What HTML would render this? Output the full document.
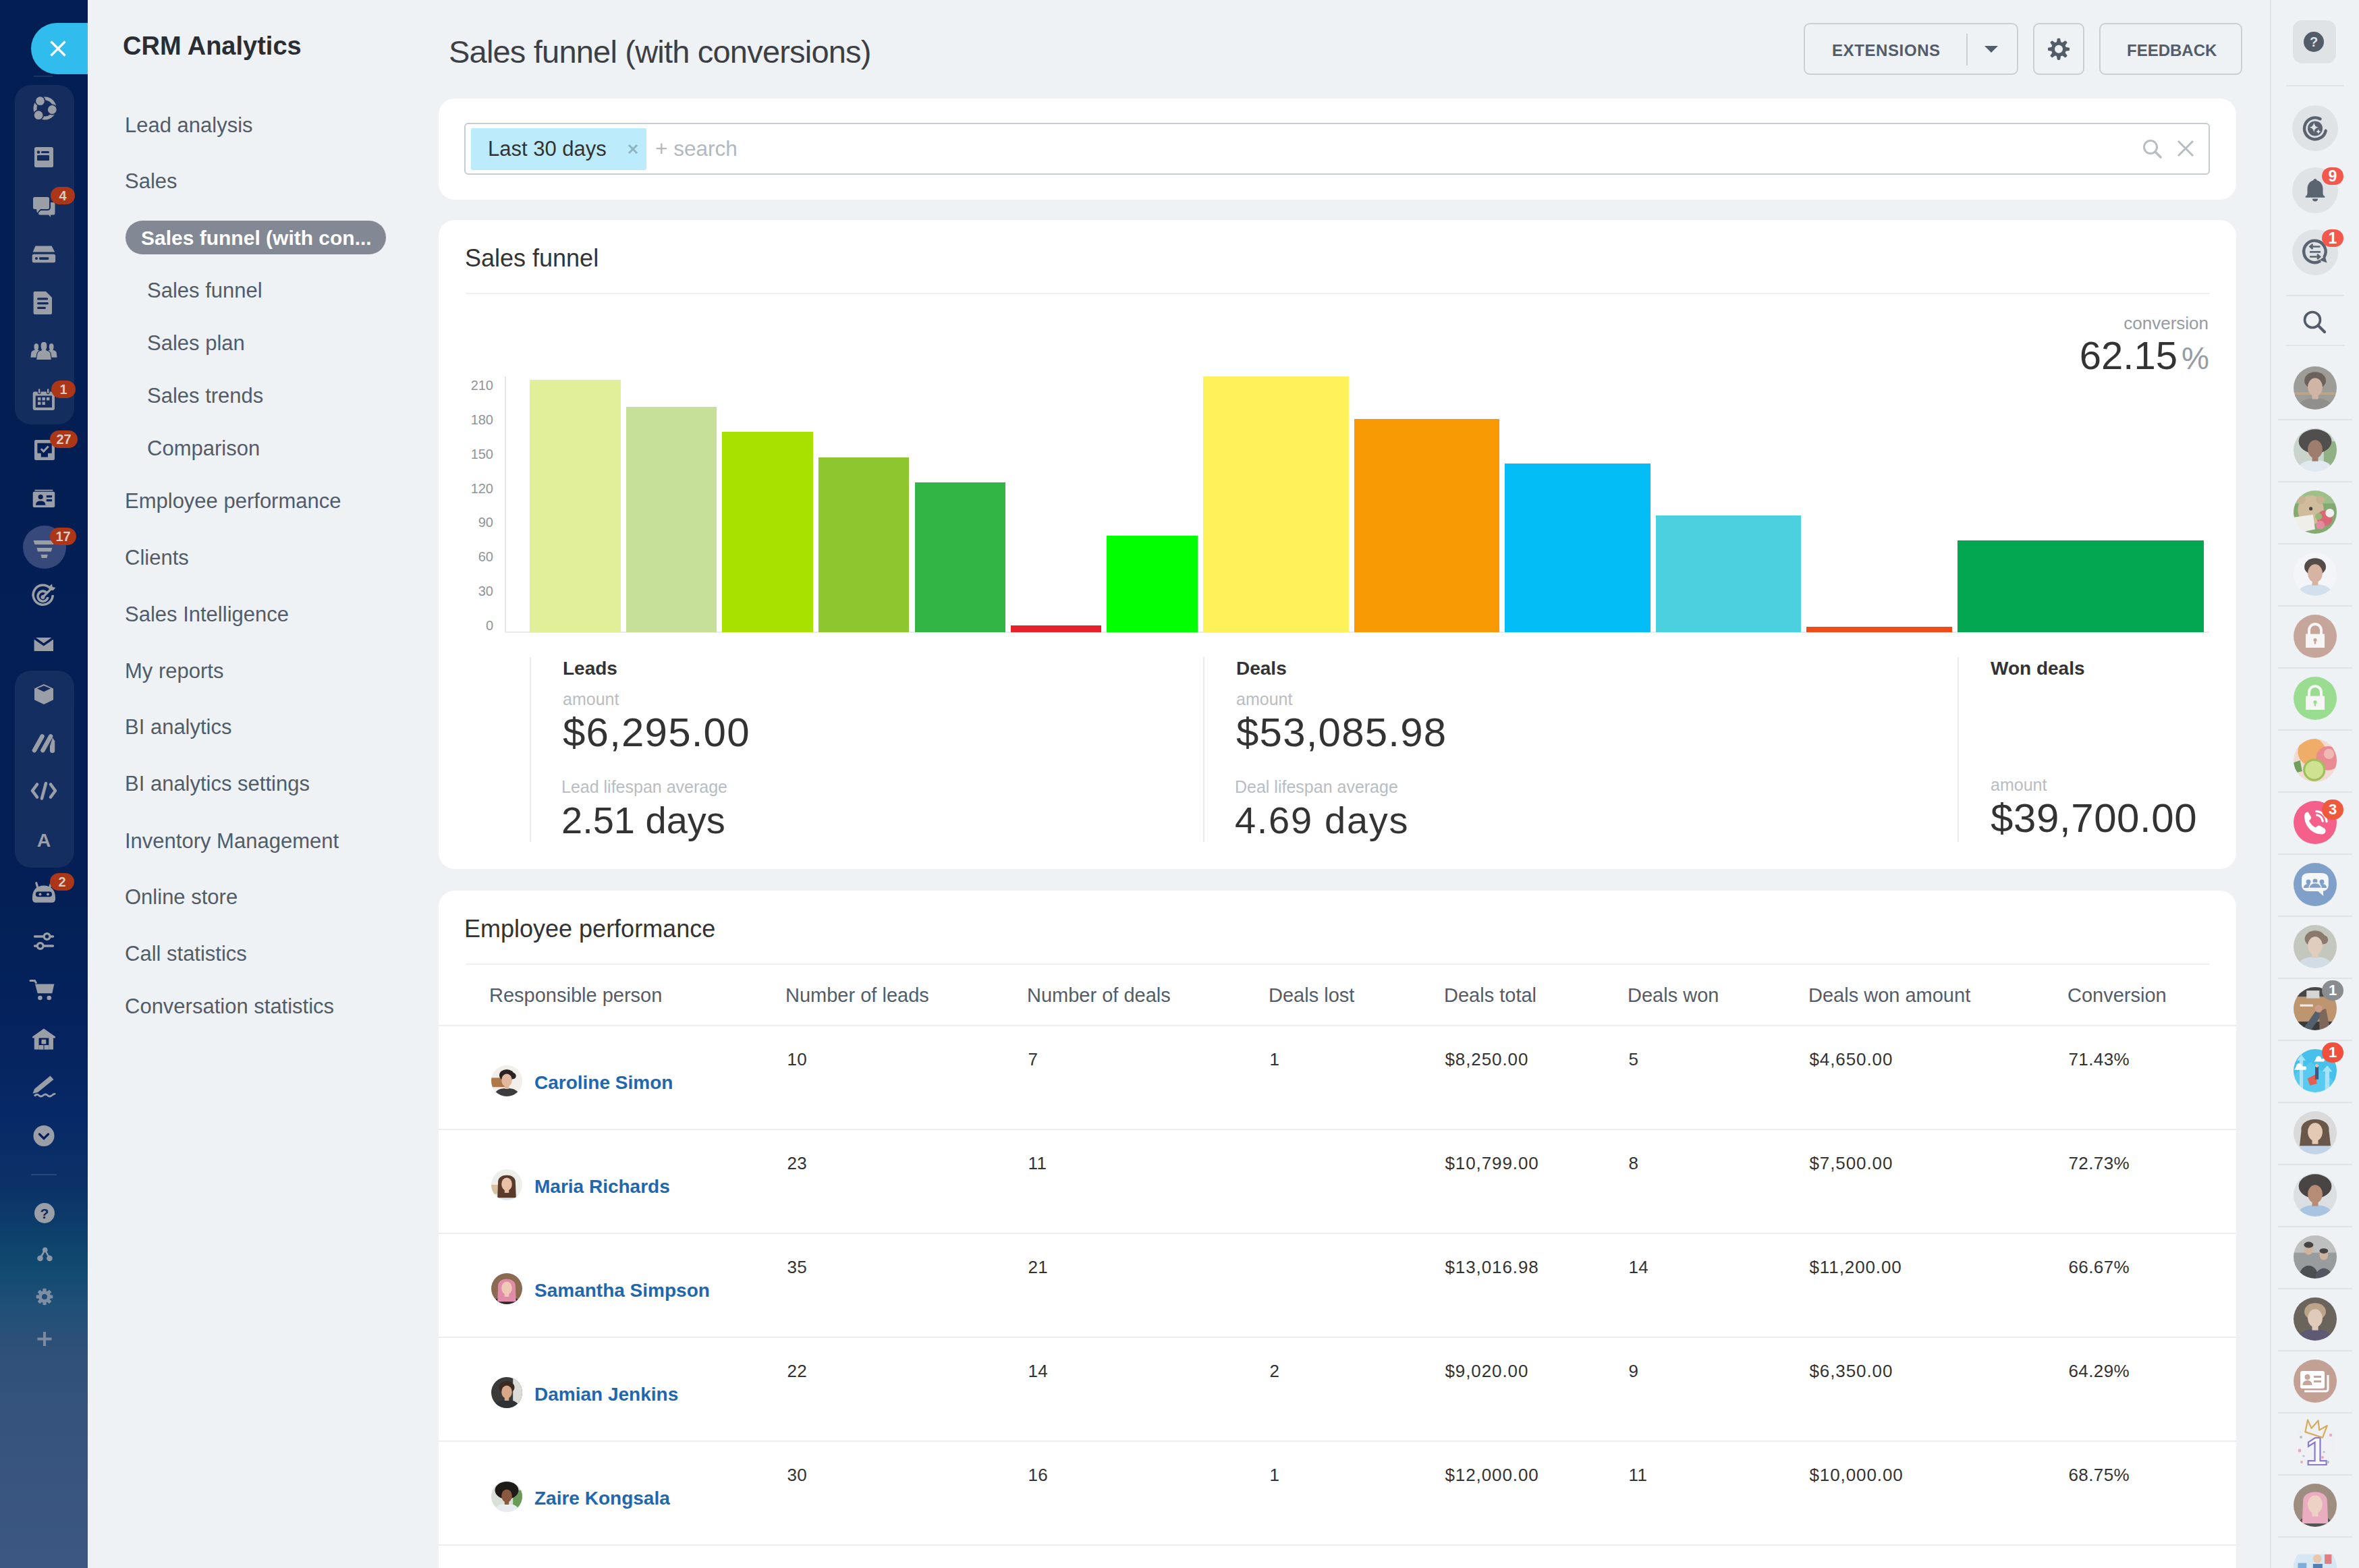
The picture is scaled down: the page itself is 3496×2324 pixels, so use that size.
<!DOCTYPE html>
<html><head><meta charset="utf-8"><title>CRM Analytics</title>
<style>
html,body{margin:0;padding:0;width:3496px;height:2324px;overflow:hidden;background:#eef2f4;font-family:"Liberation Sans", sans-serif}
.t{position:absolute;line-height:1;white-space:nowrap}
svg{display:block}
</style></head><body>
<div style="position:absolute;left:0;top:0;width:3496px;height:2324px;background:#eef2f4"></div>
<div style="position:absolute;left:0;top:0;width:130px;height:2324px;background:linear-gradient(180deg,#031e52 0px,#031f55 1300px,#04225c 1500px,#072866 1650px,#0b3268 1760px,#0d406b 1830px,#104a70 1880px,#1f4f77 1930px,#2e5079 2000px,#36537d 2100px,#3b5782 2324px)"></div>
<div style="position:absolute;left:46px;top:34px;width:84px;height:76px;background:#30bdee;border-radius:38px 0 0 38px"></div>
<svg style="position:absolute;left:71px;top:57px" width="30" height="30" viewBox="0 0 30 30"><path d="M4.5 4.5L25.5 25.5M25.5 4.5L4.5 25.5" stroke="#fff" stroke-width="3.4" stroke-linecap="butt"/></svg>
<div style="position:absolute;left:50px;top:112px;width:28px;height:2px;background:#1e3366"></div>
<div style="position:absolute;left:22px;top:126px;width:88px;height:503px;background:rgba(255,255,255,0.07);border-radius:24px"></div>
<div style="position:absolute;left:22px;top:994px;width:88px;height:292px;background:rgba(255,255,255,0.07);border-radius:24px"></div>
<div style="position:absolute;left:34px;top:779px;width:64px;height:64px;border-radius:50%;background:#36497a"></div>
<svg style="position:absolute;left:0;top:0" width="130" height="2324" viewBox="0 0 130 2324"><circle cx="66.5" cy="160.5" r="14.5" stroke="#9a9ea7" stroke-width="5" fill="none"/><circle cx="59.5" cy="149.7" r="6.4" fill="#9a9ea7" stroke="#152b5c" stroke-width="3.2"/><circle cx="77.3" cy="162.5" r="6.4" fill="#9a9ea7" stroke="#152b5c" stroke-width="3.2"/><circle cx="57.1" cy="170.7" r="6.4" fill="#9a9ea7" stroke="#152b5c" stroke-width="3.2"/><circle cx="66.5" cy="160.5" r="9" fill="#152b5c"/><circle cx="59.5" cy="149.7" r="6.4" fill="#9a9ea7"/><circle cx="77.3" cy="162.5" r="6.4" fill="#9a9ea7"/><circle cx="57.1" cy="170.7" r="6.4" fill="#9a9ea7"/><rect x="51" y="218" width="28" height="30" rx="2.5" fill="#9a9ea7"/><circle cx="57" cy="225.5" r="2.2" fill="#152b5c"/><rect x="61" y="224" width="12" height="3" rx="1.5" fill="#152b5c"/><rect x="55" y="230" width="18" height="8" rx="1" fill="#152b5c"/><rect x="57" y="300" width="24.5" height="18.5" rx="2.5" fill="#9a9ea7"/><path d="M71 317 h4 v5z" fill="#9a9ea7"/><rect x="49" y="292" width="24" height="18" rx="2.5" fill="#9a9ea7" stroke="#152b5c" stroke-width="4"/><path d="M54 309 h7 l-6 6.5z" fill="#9a9ea7" stroke="#152b5c" stroke-width="3"/><rect x="49" y="292" width="24" height="18" rx="2.5" fill="#9a9ea7"/><path d="M53.5 308 h8 l-6.5 7.5z" fill="#9a9ea7"/><path d="M52.5 364.4 h24 l4.7 9.2 h-32.5z" fill="#9a9ea7"/><rect x="47.7" y="376.8" width="34.4" height="12.5" rx="2.5" fill="#9a9ea7"/><circle cx="54" cy="383" r="2" fill="#152b5c"/><rect x="58.2" y="381.3" width="14" height="3.6" rx="1" fill="#152b5c"/><path d="M51.6 432 h16.4 l9 9 v23 a2 2 0 0 1 -2 2 h-23.4 a2 2 0 0 1 -2-2 v-30 a2 2 0 0 1 2-2z" fill="#9a9ea7"/><rect x="55" y="441.3" width="16.2" height="3.2" rx="1.6" fill="#152b5c"/><rect x="55" y="448" width="17" height="3.2" rx="1.6" fill="#152b5c"/><rect x="55" y="454.7" width="13" height="3.2" rx="1.6" fill="#152b5c"/><g fill="#9a9ea7"><path transform="translate(53.8 519.5) scale(0.78)" d="M-10.8 13 L-9.5 4 C-9 1.5 -7 0.5 -3.5 -0.5 L-3 -2 C-4.5 -4 -4.5 -7 -4.1 -10 C-3.5 -12.5 -2 -13 0 -13 C2 -13 3.5 -12.5 4.1 -10 C4.5 -7 4.5 -4 3 -2 L3.5 -0.5 C7 0.5 9 1.5 9.5 4 L10.8 13z"/><path transform="translate(76.2 519.5) scale(0.78)" d="M-10.8 13 L-9.5 4 C-9 1.5 -7 0.5 -3.5 -0.5 L-3 -2 C-4.5 -4 -4.5 -7 -4.1 -10 C-3.5 -12.5 -2 -13 0 -13 C2 -13 3.5 -12.5 4.1 -10 C4.5 -7 4.5 -4 3 -2 L3.5 -0.5 C7 0.5 9 1.5 9.5 4 L10.8 13z"/></g><path transform="translate(65 520)" d="M-10.8 13 L-9.5 4 C-9 1.5 -7 0.5 -3.5 -0.5 L-3 -2 C-4.5 -4 -4.5 -7 -4.1 -10 C-3.5 -12.5 -2 -13 0 -13 C2 -13 3.5 -12.5 4.1 -10 C4.5 -7 4.5 -4 3 -2 L3.5 -0.5 C7 0.5 9 1.5 9.5 4 L10.8 13z" fill="#9a9ea7" stroke="#152b5c" stroke-width="2.2"/><path transform="translate(65 520)" d="M-10.8 13 L-9.5 4 C-9 1.5 -7 0.5 -3.5 -0.5 L-3 -2 C-4.5 -4 -4.5 -7 -4.1 -10 C-3.5 -12.5 -2 -13 0 -13 C2 -13 3.5 -12.5 4.1 -10 C4.5 -7 4.5 -4 3 -2 L3.5 -0.5 C7 0.5 9 1.5 9.5 4 L10.8 13z" fill="#9a9ea7"/><rect x="48.7" y="580.5" width="32.3" height="27.5" rx="3" fill="#9a9ea7"/><rect x="52.7" y="586.5" width="24.3" height="17.5" fill="#152b5c"/><rect x="56.4" y="575.7" width="3.6" height="8" rx="1.8" fill="#9a9ea7" stroke="#152b5c" stroke-width="1.2"/><rect x="69.4" y="575.7" width="3.6" height="8" rx="1.8" fill="#9a9ea7" stroke="#152b5c" stroke-width="1.2"/><g fill="#9a9ea7"><rect x="56" y="589" width="4.4" height="4.4"/><rect x="62.5" y="589" width="4.4" height="4.4"/><rect x="69" y="589" width="4.4" height="4.4"/><rect x="56" y="595.6" width="4.4" height="4.4"/><rect x="62.5" y="595.6" width="4.4" height="4.4"/></g><rect x="51" y="652" width="30" height="30" rx="2.2" fill="#9a9ea7"/><path d="M55.4 656.7 h21.4 v15 h-5.8 v5.7 h-10.2 v-5.7 h-5.4z" fill="#031f55"/><path d="M60.8 665.3 l3.8 3.8 l7.1 -7.6" stroke="#9a9ea7" stroke-width="3" fill="none"/><rect x="51.5" y="725.8" width="26.8" height="1.8" fill="#9a9ea7"/><rect x="48.7" y="728.7" width="32.5" height="23.3" rx="2" fill="#9a9ea7"/><circle cx="60.2" cy="736.5" r="3.6" fill="#031f55"/><path d="M53 748.8 c0-4.5 2.8-6.3 7.2-6.3 s7.2 1.8 7.2 6.3z" fill="#031f55"/><rect x="68.8" y="734.2" width="8.3" height="3.2" fill="#031f55"/><rect x="68.8" y="740" width="8.3" height="3.2" fill="#031f55"/><path d="M49.6 801 h31.4 l-1.8 6 h-27.8z" fill="#9a9ea7"/><path d="M54.4 812 h23 l-1.6 5.6 h-19.8z" fill="#9a9ea7"/><path d="M60.5 822 h10.2 l-1.2 5 h-7.8z" fill="#9a9ea7"/><g fill="none" stroke="#9a9ea7" stroke-width="3.6"><path d="M74 871.5 A14.5 14.5 0 1 0 78.2 882"/><path d="M69.5 879 A7.5 7.5 0 1 0 71 885"/></g><circle cx="63.5" cy="885" r="3" fill="#9a9ea7"/><path d="M63.5 885 L75.5 873" stroke="#9a9ea7" stroke-width="3.2"/><path d="M73 869 l4-3.5 l0.8 4.6 l4.6 0.8 l-3.5 4 h-5.9z" fill="#9a9ea7"/><path d="M50.6 945 h28.4 v20 h-28.4z" fill="#9a9ea7"/><path d="M50.6 945.5 l14.2 10 l14.2 -10" stroke="#031f55" stroke-width="3.4" fill="none"/><path d="M65 1014 l14 6.5 v16.8 l-14 6.7 l-14 -6.7 v-16.8z" fill="#9a9ea7"/><path d="M55 1020.6 l10-4.4 l10 4.4 l-10 4.6z" fill="#152b5c"/><g stroke="#9a9ea7" stroke-width="6.6" stroke-linecap="round"><path d="M51 1112 L62.5 1091.5"/><path d="M63.5 1112 L75 1091.5"/></g><path d="M78 1093.3 l3.2 5 v14.2 a3.6 3.6 0 0 1 -7.2 0 v-7z" fill="#9a9ea7"/><g stroke="#9a9ea7" stroke-width="4.6" fill="none" stroke-linecap="round" stroke-linejoin="round"><path d="M55 1162.5 L48 1172 L55 1181.5"/><path d="M75 1162.5 L82 1172 L75 1181.5"/><path d="M68 1161 L62 1183.5"/></g><text x="65" y="1255.2" font-size="28.5" font-weight="700" text-anchor="middle" fill="#9a9ea7" font-family="Liberation Sans">A</text><path d="M53.8 1308.7 L56 1316" stroke="#9a9ea7" stroke-width="3.2" stroke-linecap="round"/><path d="M75 1311 L73.5 1316" stroke="#9a9ea7" stroke-width="3.2" stroke-linecap="round"/><path d="M48 1330 C48 1319 55 1312.6 65 1312.6 C75 1312.6 82 1319 82 1330 v3 a4.8 4.8 0 0 1 -4.8 4.8 h-24.4 a4.8 4.8 0 0 1 -4.8 -4.8z" fill="#9a9ea7"/><rect x="52.8" y="1321.6" width="24.2" height="7.6" rx="3.8" fill="#031f55"/><circle cx="59.5" cy="1325.4" r="2" fill="#9a9ea7"/><circle cx="71" cy="1325.4" r="2" fill="#9a9ea7"/><g stroke="#9a9ea7" stroke-width="3.4" stroke-linecap="round"><path d="M51.5 1388 H78.5"/><path d="M51.5 1402 H78.5"/></g><circle cx="69.6" cy="1388" r="4.4" fill="#031f55" stroke="#9a9ea7" stroke-width="3.4"/><circle cx="59.7" cy="1402" r="4.4" fill="#031f55" stroke="#9a9ea7" stroke-width="3.4"/><path d="M45 1453.5 h6.5 l1.8 3" stroke="#9a9ea7" stroke-width="3" fill="none" stroke-linecap="round"/><path d="M52 1458.4 h28.3 l-3 13.9 h-21.6z" fill="#9a9ea7"/><circle cx="59.4" cy="1479" r="3.3" fill="#9a9ea7"/><circle cx="72.8" cy="1479" r="3.3" fill="#9a9ea7"/><path d="M48 1536.6 L65 1524.6 L82 1536.6 v2 h-3 v16.8 h-28.2 v-16.8 h-2.8z" fill="#9a9ea7"/><rect x="57.5" y="1538.5" width="14.8" height="17" fill="#031f55"/><g fill="#9a9ea7"><rect x="61.5" y="1540.7" width="6.8" height="6.7"/><rect x="57.5" y="1549" width="7" height="6.5"/><rect x="65.5" y="1549" width="6.8" height="6.5"/></g><path d="M51 1614 L74.5 1594.5 l5 5.5 L56 1619 l-7.5 1.8z" fill="#9a9ea7"/><path d="M51 1624.5 q3.5-4 6.5-1 t6.5 0 t6.5 0 t6.5 0 t5-1.5" stroke="#9a9ea7" stroke-width="2.8" fill="none"/><circle cx="65" cy="1683.5" r="15.5" fill="#9a9ea7"/><path d="M58.5 1681 L65 1687.5 L71.5 1681" stroke="#031f55" stroke-width="3.2" fill="none" stroke-linecap="round"/><circle cx="66" cy="1798" r="15" fill="#9a9ea7"/><text x="66" y="1805.5" font-size="21" font-weight="700" text-anchor="middle" fill="#0c2a5e" font-family="Liberation Sans">?</text><path d="M66.7 1852.5 L59.5 1865 M66.7 1852.5 L73.4 1865" stroke="#8c95a6" stroke-width="2.6"/><g fill="#8c95a6"><circle cx="66.7" cy="1852.5" r="3.8"/><circle cx="59.5" cy="1865" r="4.3"/><circle cx="73.4" cy="1865" r="4.3"/></g><g transform="translate(66 1922)" fill="#7f8ea3"><circle r="9"/><rect x="-2.6" y="-12.3" width="5.2" height="6" rx="1" transform="rotate(0)"/><rect x="-2.6" y="-12.3" width="5.2" height="6" rx="1" transform="rotate(45)"/><rect x="-2.6" y="-12.3" width="5.2" height="6" rx="1" transform="rotate(90)"/><rect x="-2.6" y="-12.3" width="5.2" height="6" rx="1" transform="rotate(135)"/><rect x="-2.6" y="-12.3" width="5.2" height="6" rx="1" transform="rotate(180)"/><rect x="-2.6" y="-12.3" width="5.2" height="6" rx="1" transform="rotate(225)"/><rect x="-2.6" y="-12.3" width="5.2" height="6" rx="1" transform="rotate(270)"/><rect x="-2.6" y="-12.3" width="5.2" height="6" rx="1" transform="rotate(315)"/><circle r="4" fill="#1f4e7a"/></g><path d="M66 1974 V1995 M55.5 1984.5 H76.5" stroke="#7e8aa0" stroke-width="4"/></svg>
<div style="position:absolute;left:46px;top:1740px;width:38px;height:2px;background:rgba(255,255,255,0.12)"></div>
<div style="position:absolute;left:75px;top:277px;width:36px;height:26px;border-radius:13.0px;background:#ab3618;color:#dccbc2;font-weight:700;font-size:20px;line-height:26px;text-align:center">4</div>
<div style="position:absolute;left:76px;top:564px;width:36px;height:26px;border-radius:13.0px;background:#ab3618;color:#dccbc2;font-weight:700;font-size:20px;line-height:26px;text-align:center">1</div>
<div style="position:absolute;left:74px;top:638px;width:41px;height:26px;border-radius:13.0px;background:#ab3618;color:#dccbc2;font-weight:700;font-size:20px;line-height:26px;text-align:center">27</div>
<div style="position:absolute;left:74px;top:782px;width:39px;height:26px;border-radius:13.0px;background:#ab3618;color:#dccbc2;font-weight:700;font-size:20px;line-height:26px;text-align:center">17</div>
<div style="position:absolute;left:74px;top:1294px;width:36px;height:26px;border-radius:13.0px;background:#ab3618;color:#dccbc2;font-weight:700;font-size:20px;line-height:26px;text-align:center">2</div>
<div class="t" style="left:182.0px;top:48.8px;font-size:38px;color:#2a2e33;font-weight:700;">CRM Analytics</div>
<div class="t" style="left:185.0px;top:169.8px;font-size:31px;color:#525c69;font-weight:400;">Lead analysis</div>
<div class="t" style="left:185.0px;top:252.8px;font-size:31px;color:#525c69;font-weight:400;">Sales</div>
<div class="t" style="left:218.0px;top:414.8px;font-size:31px;color:#525c69;font-weight:400;">Sales funnel</div>
<div class="t" style="left:218.0px;top:492.8px;font-size:31px;color:#525c69;font-weight:400;">Sales plan</div>
<div class="t" style="left:218.0px;top:570.8px;font-size:31px;color:#525c69;font-weight:400;">Sales trends</div>
<div class="t" style="left:218.0px;top:648.8px;font-size:31px;color:#525c69;font-weight:400;">Comparison</div>
<div class="t" style="left:185.0px;top:726.8px;font-size:31px;color:#525c69;font-weight:400;">Employee performance</div>
<div class="t" style="left:185.0px;top:810.8px;font-size:31px;color:#525c69;font-weight:400;">Clients</div>
<div class="t" style="left:185.0px;top:894.8px;font-size:31px;color:#525c69;font-weight:400;">Sales Intelligence</div>
<div class="t" style="left:185.0px;top:978.8px;font-size:31px;color:#525c69;font-weight:400;">My reports</div>
<div class="t" style="left:185.0px;top:1061.8px;font-size:31px;color:#525c69;font-weight:400;">BI analytics</div>
<div class="t" style="left:185.0px;top:1145.8px;font-size:31px;color:#525c69;font-weight:400;">BI analytics settings</div>
<div class="t" style="left:185.0px;top:1230.8px;font-size:31px;color:#525c69;font-weight:400;">Inventory Management</div>
<div class="t" style="left:185.0px;top:1313.8px;font-size:31px;color:#525c69;font-weight:400;">Online store</div>
<div class="t" style="left:185.0px;top:1397.8px;font-size:31px;color:#525c69;font-weight:400;">Call statistics</div>
<div class="t" style="left:185.0px;top:1475.8px;font-size:31px;color:#525c69;font-weight:400;">Conversation statistics</div>
<div style="position:absolute;left:186px;top:327px;width:386px;height:50px;background:#828994;border-radius:25px"></div>
<div class="t" style="left:209.0px;top:337.6px;font-size:30px;color:#fff;font-weight:700;">Sales funnel (with con...</div>
<div class="t" style="left:665.0px;top:53.0px;font-size:47px;color:#3c4044;font-weight:400;letter-spacing:-0.8px">Sales funnel (with conversions)</div>
<div style="position:absolute;border:2px solid #c9cfd4;border-radius:9px;box-sizing:border-box;left:2673px;top:34px;width:318px;height:77px"></div>
<div style="position:absolute;left:2914px;top:50px;width:2px;height:47px;background:#c9cfd4"></div>
<svg style="position:absolute;left:2939px;top:66px" width="24" height="14" viewBox="0 0 24 14"><path d="M2 2 L22 2 L12 12z" fill="#535c69"/></svg>
<div class="t" style="left:2715.0px;top:62.7px;font-size:24px;color:#535c69;font-weight:700;letter-spacing:0.6px">EXTENSIONS</div>
<div style="position:absolute;border:2px solid #c9cfd4;border-radius:9px;box-sizing:border-box;left:3013px;top:34px;width:76px;height:77px"></div>
<svg style="position:absolute;left:3031px;top:53px" width="40" height="40" viewBox="-20 -19.8 40 40"><g fill="#535c69"><circle r="11"/><path d="M-3.3 -9 L-2.1 -15.8 Q0 -16.4 2.1 -15.8 L3.3 -9z" transform="rotate(0)"/><path d="M-3.3 -9 L-2.1 -15.8 Q0 -16.4 2.1 -15.8 L3.3 -9z" transform="rotate(45)"/><path d="M-3.3 -9 L-2.1 -15.8 Q0 -16.4 2.1 -15.8 L3.3 -9z" transform="rotate(90)"/><path d="M-3.3 -9 L-2.1 -15.8 Q0 -16.4 2.1 -15.8 L3.3 -9z" transform="rotate(135)"/><path d="M-3.3 -9 L-2.1 -15.8 Q0 -16.4 2.1 -15.8 L3.3 -9z" transform="rotate(180)"/><path d="M-3.3 -9 L-2.1 -15.8 Q0 -16.4 2.1 -15.8 L3.3 -9z" transform="rotate(225)"/><path d="M-3.3 -9 L-2.1 -15.8 Q0 -16.4 2.1 -15.8 L3.3 -9z" transform="rotate(270)"/><path d="M-3.3 -9 L-2.1 -15.8 Q0 -16.4 2.1 -15.8 L3.3 -9z" transform="rotate(315)"/><circle r="6" fill="#eef2f4"/></g></svg>
<div style="position:absolute;border:2px solid #c9cfd4;border-radius:9px;box-sizing:border-box;left:3111px;top:34px;width:212px;height:77px"></div>
<div class="t" style="left:3152.0px;top:62.7px;font-size:24px;color:#535c69;font-weight:700;">FEEDBACK</div>
<div style="position:absolute;left:650px;top:146px;width:2664px;height:150px;background:#fff;border-radius:24px"></div>
<div style="position:absolute;left:688px;top:182px;width:2587px;height:77px;border:2px solid #c6ccd2;border-radius:6px;box-sizing:border-box"></div>
<div style="position:absolute;left:698px;top:190px;width:260px;height:62px;background:#bcecfb;border-radius:2px"></div>
<div class="t" style="left:723.0px;top:204.8px;font-size:31px;color:#333;font-weight:400;">Last 30 days</div>
<svg style="position:absolute;left:928px;top:211px" width="20" height="20" viewBox="0 0 20 20"><path d="M4 4L16 16M16 4L4 16" stroke="#8fb3bf" stroke-width="3"/></svg>
<div class="t" style="left:971.0px;top:205.3px;font-size:31.5px;color:#b3b8bd;font-weight:400;">+ search</div>
<svg style="position:absolute;left:3172px;top:203px" width="36" height="36" viewBox="0 0 36 36"><circle cx="15" cy="15" r="9.5" stroke="#b8bdc2" stroke-width="3" fill="none"/><path d="M22 22 L30 30" stroke="#b8bdc2" stroke-width="3.5" stroke-linecap="round"/></svg>
<svg style="position:absolute;left:3222px;top:203px" width="34" height="34" viewBox="0 0 34 34"><path d="M6 6L28 28M28 6L6 28" stroke="#b8bdc2" stroke-width="3"/></svg>
<div style="position:absolute;left:650px;top:326px;width:2664px;height:962px;background:#fff;border-radius:24px"></div>
<div class="t" style="left:689.0px;top:364.5px;font-size:36px;color:#333;font-weight:400;">Sales funnel</div>
<div style="position:absolute;left:690px;top:434px;width:2584px;height:2px;background:#eef0f2"></div>
<div class="t" style="right:223.0px;top:466.0px;font-size:26px;color:#959ca4;font-weight:400;">conversion</div>
<div class="t" style="right:269.0px;top:497.9px;font-size:58px;color:#333;font-weight:400;">62.15</div>
<div class="t" style="right:222.0px;top:508.1px;font-size:46px;color:#959ca4;font-weight:400;">%</div>
<div style="position:absolute;left:748px;top:558px;width:2px;height:380px;background:#e3e6e9"></div>
<div style="position:absolute;left:748px;top:936px;width:2526px;height:2px;background:#e8eaec"></div>
<div class="t" style="right:2765.0px;top:561.1px;font-size:20px;color:#8e949b;font-weight:400;">210</div>
<div class="t" style="right:2765.0px;top:611.9px;font-size:20px;color:#8e949b;font-weight:400;">180</div>
<div class="t" style="right:2765.0px;top:662.7px;font-size:20px;color:#8e949b;font-weight:400;">150</div>
<div class="t" style="right:2765.0px;top:713.5px;font-size:20px;color:#8e949b;font-weight:400;">120</div>
<div class="t" style="right:2765.0px;top:764.3px;font-size:20px;color:#8e949b;font-weight:400;">90</div>
<div class="t" style="right:2765.0px;top:815.1px;font-size:20px;color:#8e949b;font-weight:400;">60</div>
<div class="t" style="right:2765.0px;top:865.9px;font-size:20px;color:#8e949b;font-weight:400;">30</div>
<div class="t" style="right:2765.0px;top:916.7px;font-size:20px;color:#8e949b;font-weight:400;">0</div>
<div style="position:absolute;left:785px;top:563px;width:135px;height:374px;background:#e1ef98"></div>
<div style="position:absolute;left:928px;top:603px;width:134px;height:334px;background:#c6e09a"></div>
<div style="position:absolute;left:1070px;top:640px;width:135px;height:297px;background:#a8e000"></div>
<div style="position:absolute;left:1213px;top:678px;width:134px;height:259px;background:#8dc62f"></div>
<div style="position:absolute;left:1356px;top:715px;width:134px;height:222px;background:#33b546"></div>
<div style="position:absolute;left:1498px;top:927px;width:134px;height:10px;background:#e8202a"></div>
<div style="position:absolute;left:1640px;top:794px;width:135px;height:143px;background:#00ff00"></div>
<div style="position:absolute;left:1783px;top:558px;width:216px;height:379px;background:#fef15a"></div>
<div style="position:absolute;left:2007px;top:621px;width:215px;height:316px;background:#f89a04"></div>
<div style="position:absolute;left:2230px;top:687px;width:216px;height:250px;background:#03bef6"></div>
<div style="position:absolute;left:2454px;top:764px;width:215px;height:173px;background:#4bd0e0"></div>
<div style="position:absolute;left:2677px;top:929px;width:216px;height:8px;background:#f04a1a"></div>
<div style="position:absolute;left:2901px;top:801px;width:365px;height:136px;background:#03a651"></div>
<div style="position:absolute;left:785px;top:974px;width:2px;height:274px;background:#e9ebed"></div>
<div style="position:absolute;left:1783px;top:974px;width:2px;height:274px;background:#e9ebed"></div>
<div style="position:absolute;left:2901px;top:974px;width:2px;height:274px;background:#e9ebed"></div>
<div class="t" style="left:834.0px;top:977.3px;font-size:28px;color:#333;font-weight:700;">Leads</div>
<div class="t" style="left:834.0px;top:1023.8px;font-size:25px;color:#b9bdc1;font-weight:400;">amount</div>
<div class="t" style="left:834.0px;top:1056.2px;font-size:60px;color:#333;font-weight:400;letter-spacing:1.2px">$6,295.00</div>
<div class="t" style="left:832.0px;top:1153.8px;font-size:25px;color:#b9bdc1;font-weight:400;">Lead lifespan average</div>
<div class="t" style="left:832.0px;top:1187.6px;font-size:56px;color:#333;font-weight:400;">2.51 days</div>
<div class="t" style="left:1832.0px;top:977.3px;font-size:28px;color:#333;font-weight:700;">Deals</div>
<div class="t" style="left:1832.0px;top:1023.8px;font-size:25px;color:#b9bdc1;font-weight:400;">amount</div>
<div class="t" style="left:1832.0px;top:1056.2px;font-size:60px;color:#333;font-weight:400;letter-spacing:1.2px">$53,085.98</div>
<div class="t" style="left:1830.0px;top:1153.8px;font-size:25px;color:#b9bdc1;font-weight:400;">Deal lifespan average</div>
<div class="t" style="left:1830.0px;top:1187.6px;font-size:56px;color:#333;font-weight:400;letter-spacing:1.7px">4.69 days</div>
<div class="t" style="left:2950.0px;top:977.3px;font-size:28px;color:#333;font-weight:700;">Won deals</div>
<div class="t" style="left:2950.0px;top:1150.8px;font-size:25px;color:#b9bdc1;font-weight:400;">amount</div>
<div class="t" style="left:2950.0px;top:1183.2px;font-size:60px;color:#333;font-weight:400;letter-spacing:0.6px">$39,700.00</div>
<div style="position:absolute;left:650px;top:1320px;width:2664px;height:1100px;background:#fff;border-radius:24px"></div>
<div class="t" style="left:688.0px;top:1358.5px;font-size:36px;color:#333;font-weight:400;">Employee performance</div>
<div style="position:absolute;left:690px;top:1428px;width:2584px;height:2px;background:#eef0f2"></div>
<div class="t" style="left:725.0px;top:1460.5px;font-size:29px;color:#535c69;font-weight:400;">Responsible person</div>
<div class="t" style="left:1164.0px;top:1460.5px;font-size:29px;color:#535c69;font-weight:400;">Number of leads</div>
<div class="t" style="left:1522.0px;top:1460.5px;font-size:29px;color:#535c69;font-weight:400;">Number of deals</div>
<div class="t" style="left:1880.0px;top:1460.5px;font-size:29px;color:#535c69;font-weight:400;">Deals lost</div>
<div class="t" style="left:2140.0px;top:1460.5px;font-size:29px;color:#535c69;font-weight:400;">Deals total</div>
<div class="t" style="left:2412.0px;top:1460.5px;font-size:29px;color:#535c69;font-weight:400;">Deals won</div>
<div class="t" style="left:2680.0px;top:1460.5px;font-size:29px;color:#535c69;font-weight:400;">Deals won amount</div>
<div class="t" style="left:3064.0px;top:1460.5px;font-size:29px;color:#535c69;font-weight:400;">Conversion</div>
<div style="position:absolute;left:650px;top:1519px;width:2664px;height:2px;background:#eceef0"></div>
<div class="t" style="left:1166.5px;top:1556.5px;font-size:26px;color:#333;font-weight:400;letter-spacing:0.4px">10</div>
<div class="t" style="left:1523.5px;top:1556.5px;font-size:26px;color:#333;font-weight:400;letter-spacing:0.4px">7</div>
<div class="t" style="left:1881.5px;top:1556.5px;font-size:26px;color:#333;font-weight:400;letter-spacing:0.4px">1</div>
<div class="t" style="left:2141.5px;top:1556.5px;font-size:26px;color:#333;font-weight:400;letter-spacing:0.9px">$8,250.00</div>
<div class="t" style="left:2413.5px;top:1556.5px;font-size:26px;color:#333;font-weight:400;letter-spacing:0.4px">5</div>
<div class="t" style="left:2681.5px;top:1556.5px;font-size:26px;color:#333;font-weight:400;letter-spacing:0.9px">$4,650.00</div>
<div class="t" style="left:3065.5px;top:1556.5px;font-size:26px;color:#333;font-weight:400;letter-spacing:0.4px">71.43%</div>
<svg style="position:absolute;left:728.0px;top:1579.0px" width="46" height="46" viewBox="0 0 100 100"><clipPath id="av1"><circle cx="50" cy="50" r="50"/></clipPath><g clip-path="url(#av1)" opacity="1.0"><rect width="100" height="100" fill="#f2efea"/><rect width="100" height="100" fill="#f2efea"/><rect x="0" y="40" width="45" height="30" fill="#b07848"/><path d="M38 74 L50 100 L62 74z" fill="#f8f8f8"/><path d="M8 104 C10 78 30 74 50 74 C70 74 90 78 92 104z" fill="#3c3c3e"/><ellipse cx="50" cy="32" rx="24" ry="19" fill="#2a2220"/><circle cx="70" cy="34" r="10" fill="#2a2220"/><rect x="43" y="58" width="14" height="18" fill="#e2b89e"/><ellipse cx="50" cy="48" rx="17" ry="21" fill="#e2b89e"/></g></svg>
<div class="t" style="left:792.0px;top:1591.3px;font-size:28px;color:#2067b0;font-weight:700;">Caroline Simon</div>
<div style="position:absolute;left:650px;top:1673px;width:2664px;height:2px;background:#eceef0"></div>
<div class="t" style="left:1166.5px;top:1710.5px;font-size:26px;color:#333;font-weight:400;letter-spacing:0.4px">23</div>
<div class="t" style="left:1523.5px;top:1710.5px;font-size:26px;color:#333;font-weight:400;letter-spacing:0.4px">11</div>
<div class="t" style="left:2141.5px;top:1710.5px;font-size:26px;color:#333;font-weight:400;letter-spacing:0.9px">$10,799.00</div>
<div class="t" style="left:2413.5px;top:1710.5px;font-size:26px;color:#333;font-weight:400;letter-spacing:0.4px">8</div>
<div class="t" style="left:2681.5px;top:1710.5px;font-size:26px;color:#333;font-weight:400;letter-spacing:0.9px">$7,500.00</div>
<div class="t" style="left:3065.5px;top:1710.5px;font-size:26px;color:#333;font-weight:400;letter-spacing:0.4px">72.73%</div>
<svg style="position:absolute;left:728.0px;top:1733.0px" width="46" height="46" viewBox="0 0 100 100"><clipPath id="av2"><circle cx="50" cy="50" r="50"/></clipPath><g clip-path="url(#av2)" opacity="1.0"><rect width="100" height="100" fill="#eeeeea"/><rect x="0" y="50" width="30" height="30" fill="#d8c0a0"/><path d="M8 104 C10 78 30 74 50 74 C70 74 90 78 92 104z" fill="#dfe6ee"/><path d="M22 40 C22 12 78 12 78 40 L80 92 L20 92z" fill="#5a3a2a"/><rect x="43" y="58" width="14" height="18" fill="#e8c0a6"/><ellipse cx="50" cy="48" rx="17" ry="21" fill="#e8c0a6"/></g></svg>
<div class="t" style="left:792.0px;top:1745.3px;font-size:28px;color:#2067b0;font-weight:700;">Maria Richards</div>
<div style="position:absolute;left:650px;top:1827px;width:2664px;height:2px;background:#eceef0"></div>
<div class="t" style="left:1166.5px;top:1864.5px;font-size:26px;color:#333;font-weight:400;letter-spacing:0.4px">35</div>
<div class="t" style="left:1523.5px;top:1864.5px;font-size:26px;color:#333;font-weight:400;letter-spacing:0.4px">21</div>
<div class="t" style="left:2141.5px;top:1864.5px;font-size:26px;color:#333;font-weight:400;letter-spacing:0.9px">$13,016.98</div>
<div class="t" style="left:2413.5px;top:1864.5px;font-size:26px;color:#333;font-weight:400;letter-spacing:0.4px">14</div>
<div class="t" style="left:2681.5px;top:1864.5px;font-size:26px;color:#333;font-weight:400;letter-spacing:0.9px">$11,200.00</div>
<div class="t" style="left:3065.5px;top:1864.5px;font-size:26px;color:#333;font-weight:400;letter-spacing:0.4px">66.67%</div>
<svg style="position:absolute;left:728.0px;top:1887.0px" width="46" height="46" viewBox="0 0 100 100"><clipPath id="av3"><circle cx="50" cy="50" r="50"/></clipPath><g clip-path="url(#av3)" opacity="1.0"><rect width="100" height="100" fill="#8a6a50"/><path d="M8 104 C10 78 30 74 50 74 C70 74 90 78 92 104z" fill="#2a2a2a"/><path d="M22 40 C22 12 78 12 78 40 L80 92 L20 92z" fill="#e08ca8"/><rect x="43" y="58" width="14" height="18" fill="#f0c8b8"/><ellipse cx="50" cy="48" rx="17" ry="21" fill="#f0c8b8"/></g></svg>
<div class="t" style="left:792.0px;top:1899.3px;font-size:28px;color:#2067b0;font-weight:700;">Samantha Simpson</div>
<div style="position:absolute;left:650px;top:1981px;width:2664px;height:2px;background:#eceef0"></div>
<div class="t" style="left:1166.5px;top:2018.5px;font-size:26px;color:#333;font-weight:400;letter-spacing:0.4px">22</div>
<div class="t" style="left:1523.5px;top:2018.5px;font-size:26px;color:#333;font-weight:400;letter-spacing:0.4px">14</div>
<div class="t" style="left:1881.5px;top:2018.5px;font-size:26px;color:#333;font-weight:400;letter-spacing:0.4px">2</div>
<div class="t" style="left:2141.5px;top:2018.5px;font-size:26px;color:#333;font-weight:400;letter-spacing:0.9px">$9,020.00</div>
<div class="t" style="left:2413.5px;top:2018.5px;font-size:26px;color:#333;font-weight:400;letter-spacing:0.4px">9</div>
<div class="t" style="left:2681.5px;top:2018.5px;font-size:26px;color:#333;font-weight:400;letter-spacing:0.9px">$6,350.00</div>
<div class="t" style="left:3065.5px;top:2018.5px;font-size:26px;color:#333;font-weight:400;letter-spacing:0.4px">64.29%</div>
<svg style="position:absolute;left:728.0px;top:2041.0px" width="46" height="46" viewBox="0 0 100 100"><clipPath id="av4"><circle cx="50" cy="50" r="50"/></clipPath><g clip-path="url(#av4)" opacity="1.0"><rect width="100" height="100" fill="#3a3a38"/><rect x="70" y="0" width="30" height="100" fill="#dcdcd8"/><path d="M8 104 C10 78 30 74 50 74 C70 74 90 78 92 104z" fill="#2e3236"/><ellipse cx="50" cy="33" rx="25" ry="20" fill="#3a2a22"/><rect x="43" y="58" width="14" height="18" fill="#d6a888"/><ellipse cx="50" cy="48" rx="17" ry="21" fill="#d6a888"/></g></svg>
<div class="t" style="left:792.0px;top:2053.3px;font-size:28px;color:#2067b0;font-weight:700;">Damian Jenkins</div>
<div style="position:absolute;left:650px;top:2135px;width:2664px;height:2px;background:#eceef0"></div>
<div class="t" style="left:1166.5px;top:2172.5px;font-size:26px;color:#333;font-weight:400;letter-spacing:0.4px">30</div>
<div class="t" style="left:1523.5px;top:2172.5px;font-size:26px;color:#333;font-weight:400;letter-spacing:0.4px">16</div>
<div class="t" style="left:1881.5px;top:2172.5px;font-size:26px;color:#333;font-weight:400;letter-spacing:0.4px">1</div>
<div class="t" style="left:2141.5px;top:2172.5px;font-size:26px;color:#333;font-weight:400;letter-spacing:0.9px">$12,000.00</div>
<div class="t" style="left:2413.5px;top:2172.5px;font-size:26px;color:#333;font-weight:400;letter-spacing:0.4px">11</div>
<div class="t" style="left:2681.5px;top:2172.5px;font-size:26px;color:#333;font-weight:400;letter-spacing:0.9px">$10,000.00</div>
<div class="t" style="left:3065.5px;top:2172.5px;font-size:26px;color:#333;font-weight:400;letter-spacing:0.4px">68.75%</div>
<svg style="position:absolute;left:728.0px;top:2195.0px" width="46" height="46" viewBox="0 0 100 100"><clipPath id="av5"><circle cx="50" cy="50" r="50"/></clipPath><g clip-path="url(#av5)" opacity="1.0"><rect width="100" height="100" fill="#d8e0d8"/><rect x="70" y="30" width="30" height="60" fill="#6a9a58"/><path d="M8 104 C10 78 30 74 50 74 C70 74 90 78 92 104z" fill="#e8ecef"/><ellipse cx="50" cy="30" rx="38" ry="28" fill="#1e1a18"/><rect x="43" y="58" width="14" height="18" fill="#8a5a40"/><ellipse cx="50" cy="48" rx="17" ry="21" fill="#8a5a40"/></g></svg>
<div class="t" style="left:792.0px;top:2207.3px;font-size:28px;color:#2067b0;font-weight:700;">Zaire Kongsala</div>
<div style="position:absolute;left:650px;top:2289px;width:2664px;height:2px;background:#eceef0"></div>
<div style="position:absolute;left:3364px;top:0px;width:2px;height:2324px;background:#dde3e7"></div>
<div style="position:absolute;left:3398px;top:30px;width:64px;height:64px;background:#dfe3e6;border-radius:14px"></div>
<svg style="position:absolute;left:3413px;top:46px" width="32" height="32" viewBox="0 0 32 32"><circle cx="16" cy="16" r="15" fill="#535c69"/><text x="16" y="23" font-size="20" font-weight="700" text-anchor="middle" fill="#dfe3e6" font-family="Liberation Sans">?</text></svg>
<div style="position:absolute;left:3388px;top:126px;width:86px;height:2px;background:#dfe4e8"></div>
<div style="position:absolute;left:3397px;top:155.5px;width:68px;height:68px;border-radius:50%;background:#dfe3e6"></div>
<div style="position:absolute;left:3397px;top:247.7px;width:68px;height:68px;border-radius:50%;background:#dfe3e6"></div>
<div style="position:absolute;left:3397px;top:339.7px;width:68px;height:68px;border-radius:50%;background:#dfe3e6"></div>
<svg style="position:absolute;left:3390px;top:150px" width="90" height="260" viewBox="3390 150 90 260"><path d="M3438.5 176.3 A16 16 0 1 0 3446.7 193.7" stroke="#5a6370" stroke-width="4.4" fill="none" stroke-linecap="round"/><circle cx="3431" cy="190.4" r="11" fill="#5a6370"/><path d="M3429.2 181.5 Q3430 188 3436 188.7 Q3430 189.5 3429.2 196 Q3428.4 189.5 3422.4 188.7 Q3428.4 188 3429.2 181.5z" fill="#dfe3e6"/><path d="M3435.8 191 Q3436.2 194.6 3439.6 195 Q3436.2 195.4 3435.8 199 Q3435.4 195.4 3432 195 Q3435.4 194.6 3435.8 191z" fill="#dfe3e6"/><path d="M3431 265 c-1.6 0 -2.4 1 -2.6 2.2 c-5.8 1.6 -8.9 6.6 -8.9 12.8 v6.5 c0 2.5 -1.2 3.5 -2.8 4.6 v1.6 h28.6 v-1.6 c-1.6 -1.1 -2.8 -2.1 -2.8 -4.6 v-6.5 c0 -6.2 -3.1 -11.2 -8.9 -12.8 c-0.2 -1.2 -1 -2.2 -2.6 -2.2z" fill="#5a6370"/><path d="M3427 294.5 a4 4 0 0 0 8 0z" fill="#5a6370"/><path d="M3439.0 386.6 A16.2 16.2 0 1 1 3444.1 381.5" stroke="#5a6370" stroke-width="4.4" fill="none"/><path d="M3437.5 385.5 L3448.5 389.5 L3445.5 379.5z" fill="#5a6370"/><path d="M3423 373.4 H3439" stroke="#5a6370" stroke-width="2.6"/><path d="M3438.5 365.5 H3424 M3427.5 362 L3423.5 365.5 L3427.5 369" stroke="#5a6370" stroke-width="2.6" fill="none"/><path d="M3423 380.5 H3437.5 M3434 377 L3438 380.5 L3434 384" stroke="#5a6370" stroke-width="2.6" fill="none"/></svg>
<div style="position:absolute;left:3441px;top:248px;width:32px;height:26px;border-radius:13.0px;background:#f4574b;color:#fff;font-weight:700;font-size:23px;line-height:26px;text-align:center">9</div>
<div style="position:absolute;left:3441px;top:340px;width:32px;height:26px;border-radius:13.0px;background:#f4574b;color:#fff;font-weight:700;font-size:23px;line-height:26px;text-align:center">1</div>
<div style="position:absolute;left:3388px;top:437px;width:86px;height:2px;background:#dfe4e8"></div>
<svg style="position:absolute;left:3408px;top:455px" width="46" height="46" viewBox="0 0 46 46"><circle cx="19" cy="19" r="11.5" stroke="#535c69" stroke-width="3.6" fill="none"/><path d="M27.5 27.5 L37 37" stroke="#535c69" stroke-width="4.2" stroke-linecap="round"/></svg>
<div style="position:absolute;left:3388px;top:511px;width:86px;height:2px;background:#dfe4e8"></div>
<svg style="position:absolute;left:3399.0px;top:543.0px" width="64" height="64" viewBox="0 0 100 100"><clipPath id="av6"><circle cx="50" cy="50" r="50"/></clipPath><g clip-path="url(#av6)" opacity="0.8"><rect width="100" height="100" fill="#8a8680"/><rect x="0" y="60" width="100" height="6" fill="#b09070"/><path d="M8 104 C10 78 30 74 50 74 C70 74 90 78 92 104z" fill="#7a7672"/><ellipse cx="50" cy="33" rx="25" ry="20" fill="#4a3e36"/><rect x="43" y="58" width="14" height="18" fill="#caa690"/><ellipse cx="50" cy="48" rx="17" ry="21" fill="#caa690"/></g></svg>
<div style="position:absolute;left:3376px;top:621px;width:110px;height:2px;background:#dfe4e8"></div>
<svg style="position:absolute;left:3399.0px;top:635.0px" width="64" height="64" viewBox="0 0 100 100"><clipPath id="av7"><circle cx="50" cy="50" r="50"/></clipPath><g clip-path="url(#av7)" opacity="0.8"><rect width="100" height="100" fill="#c0ccc4"/><rect x="70" y="30" width="30" height="60" fill="#7aa068"/><path d="M8 104 C10 78 30 74 50 74 C70 74 90 78 92 104z" fill="#dde6ee"/><ellipse cx="50" cy="30" rx="38" ry="28" fill="#2a2624"/><rect x="43" y="58" width="14" height="18" fill="#8a604a"/><ellipse cx="50" cy="48" rx="17" ry="21" fill="#8a604a"/></g></svg>
<div style="position:absolute;left:3376px;top:713px;width:110px;height:2px;background:#dfe4e8"></div>
<svg style="position:absolute;left:3399.0px;top:727.0px" width="64" height="64" viewBox="0 0 100 100"><clipPath id="av8"><circle cx="50" cy="50" r="50"/></clipPath><g clip-path="url(#av8)" opacity="0.85"><rect width="100" height="100" fill="#6f9e5a"/><rect x="0" y="0" width="100" height="30" fill="#8fb878"/><ellipse cx="40" cy="45" rx="30" ry="34" fill="#cbb38c"/><circle cx="18" cy="22" r="10" fill="#c0a880"/><circle cx="62" cy="22" r="10" fill="#c0a880"/><circle cx="40" cy="42" r="4" fill="#2a2420"/><path d="M0 62 L45 56 L50 90 L0 100z" fill="#f0eee6"/><circle cx="72" cy="64" r="18" fill="#d85060"/><circle cx="84" cy="52" r="10" fill="#f0f0f0"/><circle cx="62" cy="80" r="10" fill="#e07890"/><circle cx="58" cy="60" r="8" fill="#88b060"/></g></svg>
<div style="position:absolute;left:3376px;top:805px;width:110px;height:2px;background:#dfe4e8"></div>
<svg style="position:absolute;left:3399.0px;top:819.0px" width="64" height="64" viewBox="0 0 100 100"><clipPath id="av9"><circle cx="50" cy="50" r="50"/></clipPath><g clip-path="url(#av9)" opacity="0.85"><rect width="100" height="100" fill="#f4f6f8"/><path d="M8 104 C10 78 30 74 50 74 C70 74 90 78 92 104z" fill="#cddcea"/><ellipse cx="50" cy="33" rx="25" ry="20" fill="#3a3028"/><rect x="43" y="58" width="14" height="18" fill="#d2aa92"/><ellipse cx="50" cy="48" rx="17" ry="21" fill="#d2aa92"/></g></svg>
<div style="position:absolute;left:3376px;top:897px;width:110px;height:2px;background:#dfe4e8"></div>
<div style="position:absolute;left:3399px;top:911px;width:64px;height:64px;border-radius:50%;background:#c6a69a"></div>
<div style="position:absolute;left:3376px;top:989px;width:110px;height:2px;background:#dfe4e8"></div>
<div style="position:absolute;left:3399px;top:1003px;width:64px;height:64px;border-radius:50%;background:#9adc90"></div>
<div style="position:absolute;left:3376px;top:1081px;width:110px;height:2px;background:#dfe4e8"></div>
<svg style="position:absolute;left:3399.0px;top:1095.0px" width="64" height="64" viewBox="0 0 100 100"><clipPath id="av10"><circle cx="50" cy="50" r="50"/></clipPath><g clip-path="url(#av10)" opacity="0.85"><rect width="100" height="100" fill="#f2d8cc"/><circle cx="42" cy="30" r="32" fill="#f0a050"/><circle cx="80" cy="45" r="28" fill="#e87a80"/><circle cx="82" cy="35" r="12" fill="#f0b0a8"/><circle cx="48" cy="72" r="26" fill="#90b840"/><circle cx="48" cy="72" r="21" fill="#c8e080"/><path d="M0 55 L15 50 L20 75 L0 80z" fill="#5a9040"/></g></svg>
<div style="position:absolute;left:3376px;top:1173px;width:110px;height:2px;background:#dfe4e8"></div>
<div style="position:absolute;left:3399px;top:1187px;width:64px;height:64px;border-radius:50%;background:#f4608a"></div>
<div style="position:absolute;left:3376px;top:1265px;width:110px;height:2px;background:#dfe4e8"></div>
<div style="position:absolute;left:3399px;top:1279px;width:64px;height:64px;border-radius:50%;background:#7fa0c8"></div>
<div style="position:absolute;left:3376px;top:1357px;width:110px;height:2px;background:#dfe4e8"></div>
<svg style="position:absolute;left:3399.0px;top:1371.0px" width="64" height="64" viewBox="0 0 100 100"><clipPath id="av11"><circle cx="50" cy="50" r="50"/></clipPath><g clip-path="url(#av11)" opacity="0.75"><rect width="100" height="100" fill="#b4b8ac"/><path d="M8 104 C10 78 30 74 50 74 C70 74 90 78 92 104z" fill="#c8d4e0"/><ellipse cx="50" cy="32" rx="24" ry="19" fill="#6a5040"/><circle cx="70" cy="34" r="10" fill="#6a5040"/><rect x="43" y="58" width="14" height="18" fill="#dcc0ac"/><ellipse cx="50" cy="48" rx="17" ry="21" fill="#dcc0ac"/></g></svg>
<div style="position:absolute;left:3376px;top:1449px;width:110px;height:2px;background:#dfe4e8"></div>
<svg style="position:absolute;left:3399.0px;top:1463.0px" width="64" height="64" viewBox="0 0 100 100"><clipPath id="av12"><circle cx="50" cy="50" r="50"/></clipPath><g clip-path="url(#av12)" opacity="0.85"><rect width="100" height="100" fill="#b48658"/><rect x="0" y="0" width="100" height="22" fill="#2a2a2a"/><rect x="0" y="80" width="100" height="20" fill="#1a1a1a"/><rect x="30" y="8" width="30" height="18" fill="#d0d0d0"/><path d="M20 100 L55 50 L70 58 L40 100z" fill="#384858"/><path d="M60 100 L60 55 L75 50 L85 100z" fill="#6a5040"/><rect x="15" y="40" width="30" height="5" fill="#e8e8e8"/><circle cx="58" cy="50" r="9" fill="#c89070"/></g></svg>
<div style="position:absolute;left:3376px;top:1541px;width:110px;height:2px;background:#dfe4e8"></div>
<svg style="position:absolute;left:3399.0px;top:1555.0px" width="64" height="64" viewBox="0 0 100 100"><clipPath id="av13"><circle cx="50" cy="50" r="50"/></clipPath><g clip-path="url(#av13)" opacity="0.85"><rect width="100" height="100" fill="#2ab8ea"/><path d="M0 60 L40 30 L100 80 L100 100 L0 100z" fill="#3cc4f0"/><path d="M18 12 L28 26 L22 26 L22 100 L14 100 L14 26 L8 26z" fill="#9ae0f8"/><path d="M78 38 L90 52 L83 52 L83 100 L73 100 L73 52 L66 52z" fill="#9ae0f8"/><path d="M6 40 a7 7 0 0 1 14 0 h8 a5 5 0 0 1 0 8 h-26z" fill="#fff"/><path d="M52 22 a6 6 0 0 1 12 0 h6 a4 4 0 0 1 0 7 h-22z" fill="#fff"/><path d="M32 68 L52 58 L54 80 L38 84z" fill="#e04838"/><rect x="50" y="40" width="8" height="30" fill="#2a3a6a"/><circle cx="54" cy="38" r="4" fill="#e8b890"/></g></svg>
<div style="position:absolute;left:3376px;top:1633px;width:110px;height:2px;background:#dfe4e8"></div>
<svg style="position:absolute;left:3399.0px;top:1647.0px" width="64" height="64" viewBox="0 0 100 100"><clipPath id="av14"><circle cx="50" cy="50" r="50"/></clipPath><g clip-path="url(#av14)" opacity="0.8"><rect width="100" height="100" fill="#d4d4d2"/><path d="M8 104 C10 78 30 74 50 74 C70 74 90 78 92 104z" fill="#b8cce6"/><path d="M18 45 C14 10 86 10 82 45 L86 80 L14 80z" fill="#4a3020"/><rect x="43" y="58" width="14" height="18" fill="#e2bea6"/><ellipse cx="50" cy="48" rx="17" ry="21" fill="#e2bea6"/></g></svg>
<div style="position:absolute;left:3376px;top:1725px;width:110px;height:2px;background:#dfe4e8"></div>
<svg style="position:absolute;left:3399.0px;top:1739.0px" width="64" height="64" viewBox="0 0 100 100"><clipPath id="av15"><circle cx="50" cy="50" r="50"/></clipPath><g clip-path="url(#av15)" opacity="0.8"><rect width="100" height="100" fill="#d6dade"/><path d="M8 104 C10 78 30 74 50 74 C70 74 90 78 92 104z" fill="#98b8dc"/><ellipse cx="50" cy="30" rx="38" ry="28" fill="#201a18"/><rect x="43" y="58" width="14" height="18" fill="#a87258"/><ellipse cx="50" cy="48" rx="17" ry="21" fill="#a87258"/></g></svg>
<div style="position:absolute;left:3376px;top:1817px;width:110px;height:2px;background:#dfe4e8"></div>
<svg style="position:absolute;left:3399.0px;top:1831.0px" width="64" height="64" viewBox="0 0 100 100"><clipPath id="av16"><circle cx="50" cy="50" r="50"/></clipPath><g clip-path="url(#av16)" opacity="0.85"><rect width="100" height="100" fill="#8a8e8c"/><rect x="0" y="0" width="100" height="40" fill="#b4b8b6"/><ellipse cx="35" cy="32" rx="11" ry="13" fill="#c8a890"/><ellipse cx="35" cy="22" rx="11" ry="7" fill="#2a2624"/><path d="M12 100 C14 60 56 60 58 100z" fill="#303436"/><ellipse cx="70" cy="45" rx="10" ry="12" fill="#c8a890"/><ellipse cx="70" cy="36" rx="10" ry="6" fill="#2a2624"/><path d="M50 100 C52 68 88 68 90 100z" fill="#3a3e48"/></g></svg>
<div style="position:absolute;left:3376px;top:1909px;width:110px;height:2px;background:#dfe4e8"></div>
<svg style="position:absolute;left:3399.0px;top:1923.0px" width="64" height="64" viewBox="0 0 100 100"><clipPath id="av17"><circle cx="50" cy="50" r="50"/></clipPath><g clip-path="url(#av17)" opacity="0.8"><rect width="100" height="100" fill="#4a4038"/><path d="M8 104 C10 78 30 74 50 74 C70 74 90 78 92 104z" fill="#3a3454"/><ellipse cx="50" cy="33" rx="25" ry="20" fill="#b09070"/><rect x="43" y="58" width="14" height="18" fill="#dcc0aa"/><ellipse cx="50" cy="48" rx="17" ry="21" fill="#dcc0aa"/></g></svg>
<div style="position:absolute;left:3376px;top:2001px;width:110px;height:2px;background:#dfe4e8"></div>
<div style="position:absolute;left:3399px;top:2015px;width:64px;height:64px;border-radius:50%;background:#c2a094"></div>
<div style="position:absolute;left:3376px;top:2093px;width:110px;height:2px;background:#dfe4e8"></div>
<div style="position:absolute;left:3399px;top:2107px;width:64px;height:64px;border-radius:50%;background:radial-gradient(circle at 50% 50%,#f2f2f6 0,#eff0f4 60%,#eef2f4 100%)"></div>
<div style="position:absolute;left:3376px;top:2185px;width:110px;height:2px;background:#dfe4e8"></div>
<svg style="position:absolute;left:3399.0px;top:2199.0px" width="64" height="64" viewBox="0 0 100 100"><clipPath id="av18"><circle cx="50" cy="50" r="50"/></clipPath><g clip-path="url(#av18)" opacity="0.8"><rect width="100" height="100" fill="#8a7464"/><path d="M8 104 C10 78 30 74 50 74 C70 74 90 78 92 104z" fill="#302a2a"/><path d="M22 40 C22 12 78 12 78 40 L80 92 L20 92z" fill="#e89ab4"/><rect x="43" y="58" width="14" height="18" fill="#ecc8b8"/><ellipse cx="50" cy="48" rx="17" ry="21" fill="#ecc8b8"/></g></svg>
<div style="position:absolute;left:3376px;top:2277px;width:110px;height:2px;background:#dfe4e8"></div>
<svg style="position:absolute;left:3399.0px;top:2291.0px" width="64" height="64" viewBox="0 0 100 100"><clipPath id="av19"><circle cx="50" cy="50" r="50"/></clipPath><g clip-path="url(#av19)" opacity="0.85"><rect width="100" height="100" fill="#eef2f4"/><rect x="0" y="20" width="100" height="80" fill="#d2e6f4"/><rect x="10" y="40" width="20" height="30" fill="#6aa0d8"/><circle cx="55" cy="30" r="10" fill="#e8c0a0"/><rect x="45" y="42" width="22" height="40" fill="#3a6aa8"/><rect x="72" y="20" width="16" height="22" fill="#e06a6a"/></g></svg>
<svg style="position:absolute;left:3411px;top:923px" width="40" height="40" viewBox="0 0 40 40"><path d="M11 18 V11 A9 9 0 0 1 29 11 V18" stroke="#f6f6f6" stroke-width="4" fill="none"/><rect x="6" y="16.6" width="28" height="20.4" fill="#f6f6f6"/><circle cx="20" cy="25.5" r="2.6" fill="#c6a69a"/><rect x="18.8" y="26" width="2.4" height="5.5" fill="#c6a69a"/></svg>
<svg style="position:absolute;left:3411px;top:1015px" width="40" height="40" viewBox="0 0 40 40"><path d="M11 18 V11 A9 9 0 0 1 29 11 V18" stroke="#f6f6f6" stroke-width="4" fill="none"/><rect x="6" y="16.6" width="28" height="20.4" fill="#f6f6f6"/><circle cx="20" cy="25.5" r="2.6" fill="#9adc90"/><rect x="18.8" y="26" width="2.4" height="5.5" fill="#9adc90"/></svg>
<svg style="position:absolute;left:3399px;top:1187px" width="64" height="64" viewBox="3399 1187 64 64"><path d="M3420.5 1203.5 c-3 0 -5.5 2 -5.5 6 c0 14 11 27 26 27 c3.5 0 5.5 -2.5 5.5 -5 c0 -2 -1 -3.5 -3 -4.5 l-5 -3 c-2 -1 -3.5 -0.5 -4.8 0.8 l-1.8 1.8 c-4 -1.8 -8 -5.8 -10 -10 l1.8 -1.8 c1.3 -1.3 1.8 -3 0.8 -4.8 l-3 -5 c-1 -1.5 -1.5 -2.5 -1 -1.5z" fill="#fff"/><path d="M3433.8 1208 A11 11 0 0 1 3442.2 1217" stroke="#fff" stroke-width="3.3" fill="none" stroke-linecap="round"/><path d="M3432.7 1202.3 A16.5 16.5 0 0 1 3448 1217.7" stroke="#fff" stroke-width="3.3" fill="none" stroke-linecap="round"/></svg>
<div style="position:absolute;left:3441px;top:1185px;width:32px;height:30px;border-radius:15.0px;background:#f05a3c;color:#fff;font-weight:700;font-size:22px;line-height:30px;text-align:center">3</div>
<svg style="position:absolute;left:3399px;top:1279px" width="64" height="64" viewBox="3399 1279 64 64"><path d="M3422 1294 h18 c7 0 10.8 3 10.8 9 v8 c0 6 -3 9 -8 9.5 l0.5 7.5 l-8 -7 h-13.3 c-7 0 -11 -3 -11 -9.5 v-8.5 c0-6 4-9 11-9z" fill="#f4f6f8"/><g fill="#7fa0c8"><circle cx="3421" cy="1307" r="3.4"/><path d="M3414 1316 c0-4 3-6 7-6 s7 2 7 6z"/><circle cx="3441" cy="1307" r="3.4"/><path d="M3434 1316 c0-4 3-6 7-6 s7 2 7 6z"/><circle cx="3431" cy="1306" r="4.2" stroke="#f4f6f8" stroke-width="1.5"/><path d="M3422 1316.5 c0-5 4-8 9-8 s9 3 9 8z" stroke="#f4f6f8" stroke-width="1.5"/></g></svg>
<div style="position:absolute;left:3441px;top:1453px;width:32px;height:30px;border-radius:15.0px;background:#8a8d90;color:#fff;font-weight:700;font-size:22px;line-height:30px;text-align:center">1</div>
<div style="position:absolute;left:3441px;top:1545px;width:32px;height:30px;border-radius:15.0px;background:#f0503c;color:#fff;font-weight:700;font-size:22px;line-height:30px;text-align:center">1</div>
<svg style="position:absolute;left:3399px;top:2015px" width="64" height="64" viewBox="0 0 64 64"><rect x="10" y="17" width="36" height="26" rx="3" fill="#fff"/><path d="M51 23 v21 a3 3 0 0 1 -3 3 h-32" stroke="#fff" stroke-width="3" fill="none"/><circle cx="20.5" cy="26" r="4" fill="#c6a69a"/><path d="M13.5 38 c0-5 3-7 7-7 s7 2 7 7z" fill="#c6a69a"/><rect x="30" y="24" width="11" height="3" fill="#c6a69a"/><rect x="30" y="31" width="11" height="3" fill="#c6a69a"/></svg>
<div class="t" style="left:3417.0px;top:2121.9px;font-size:58px;color:#f8f8fc;font-weight:700;-webkit-text-stroke:2.2px #8c7cc8">1</div>
<svg style="position:absolute;left:3410px;top:2100px" width="50" height="40" viewBox="0 0 50 40"><g transform="rotate(18 25 20)"><path d="M8 28 L6 10 L15 20 L21 6 L27 19 L36 9 L35 28z" stroke="#d4ac5c" stroke-width="2.2" fill="none" stroke-linejoin="round"/></g><g fill="#e8a8c0"><circle cx="44" cy="27" r="2.2"/></g></svg>
<svg style="position:absolute;left:3400px;top:2115px" width="64" height="60" viewBox="0 0 64 60"><g fill="#e8a8c0"><circle cx="8" cy="35" r="2.4"/><circle cx="11" cy="52" r="2"/><circle cx="42" cy="45" r="2"/></g><g fill="#b8bcc4"><circle cx="10" cy="15" r="2"/><circle cx="44" cy="37" r="1.6"/><circle cx="14" cy="43" r="1.6"/><circle cx="50" cy="52" r="2"/></g></svg>
</body></html>
